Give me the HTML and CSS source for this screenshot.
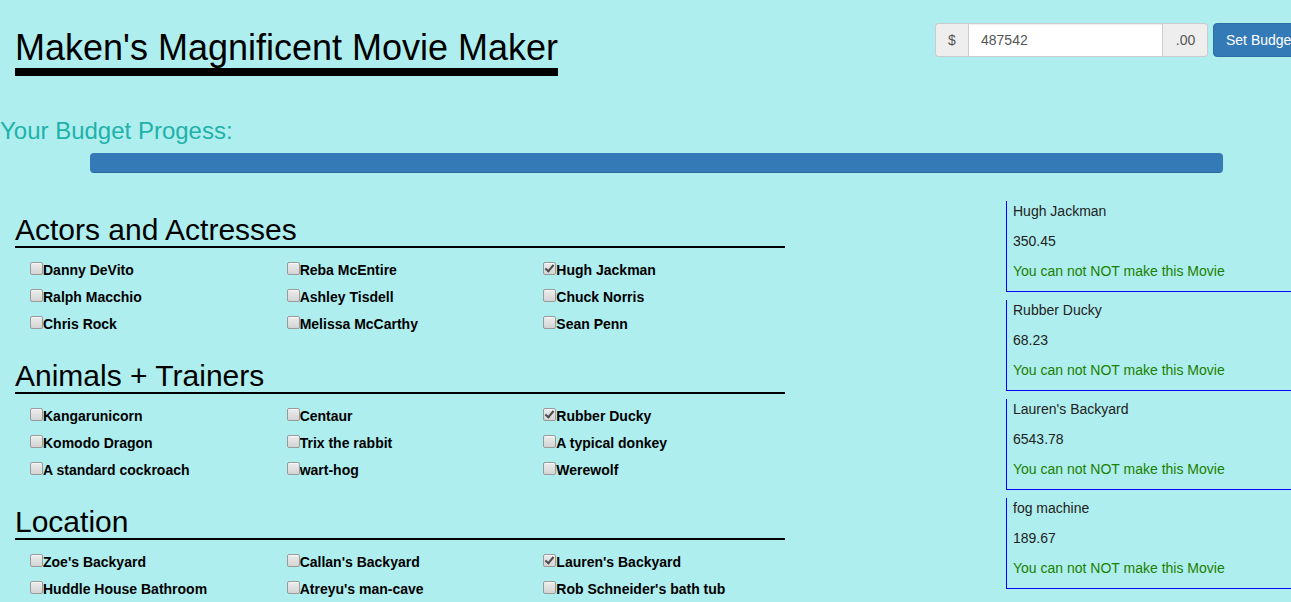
FILE: index.html
```html
<!DOCTYPE html>
<html lang="en">
<head>
<meta charset="utf-8">
<title>Maken's Magnificent Movie Maker</title>
<link rel="stylesheet" href="styles.css">
</head>
<body>
<header class="top">
  <h1 class="title">Maken's Magnificent Movie Maker</h1>
  <form class="budget-form">
    <div class="input-group">
      <span class="addon addon-left">$</span>
      <input class="budget-input" type="text" value="487542">
      <span class="addon addon-right">.00</span>
    </div>
    <button type="button" class="btn-primary">Set Budget</button>
  </form>
</header>

<h3 class="progress-label">Your Budget Progess:</h3>
<div class="progress"><div class="progress-bar"></div></div>

<main class="main">
  <div class="choices">
    <section class="group">
      <h2 class="group-title">Actors and Actresses</h2>
      <div class="options">
        <label class="opt"><input type="checkbox"><span>Danny DeVito</span></label>
        <label class="opt"><input type="checkbox"><span>Reba McEntire</span></label>
        <label class="opt"><input type="checkbox" checked><span>Hugh Jackman</span></label>
        <label class="opt"><input type="checkbox"><span>Ralph Macchio</span></label>
        <label class="opt"><input type="checkbox"><span>Ashley Tisdell</span></label>
        <label class="opt"><input type="checkbox"><span>Chuck Norris</span></label>
        <label class="opt"><input type="checkbox"><span>Chris Rock</span></label>
        <label class="opt"><input type="checkbox"><span>Melissa McCarthy</span></label>
        <label class="opt"><input type="checkbox"><span>Sean Penn</span></label>
      </div>
    </section>
    <section class="group">
      <h2 class="group-title">Animals + Trainers</h2>
      <div class="options">
        <label class="opt"><input type="checkbox"><span>Kangarunicorn</span></label>
        <label class="opt"><input type="checkbox"><span>Centaur</span></label>
        <label class="opt"><input type="checkbox" checked><span>Rubber Ducky</span></label>
        <label class="opt"><input type="checkbox"><span>Komodo Dragon</span></label>
        <label class="opt"><input type="checkbox"><span>Trix the rabbit</span></label>
        <label class="opt"><input type="checkbox"><span>A typical donkey</span></label>
        <label class="opt"><input type="checkbox"><span>A standard cockroach</span></label>
        <label class="opt"><input type="checkbox"><span>wart-hog</span></label>
        <label class="opt"><input type="checkbox"><span>Werewolf</span></label>
      </div>
    </section>
    <section class="group">
      <h2 class="group-title">Location</h2>
      <div class="options">
        <label class="opt"><input type="checkbox"><span>Zoe's Backyard</span></label>
        <label class="opt"><input type="checkbox"><span>Callan's Backyard</span></label>
        <label class="opt"><input type="checkbox" checked><span>Lauren's Backyard</span></label>
        <label class="opt"><input type="checkbox"><span>Huddle House Bathroom</span></label>
        <label class="opt"><input type="checkbox"><span>Atreyu's man-cave</span></label>
        <label class="opt"><input type="checkbox"><span>Rob Schneider's bath tub</span></label>
      </div>
    </section>
  </div>

  <aside class="selected">
    <div class="card">
      <p>Hugh Jackman</p>
      <p>350.45</p>
      <p class="ok">You can not NOT make this Movie</p>
    </div>
    <div class="card">
      <p>Rubber Ducky</p>
      <p>68.23</p>
      <p class="ok">You can not NOT make this Movie</p>
    </div>
    <div class="card">
      <p>Lauren's Backyard</p>
      <p>6543.78</p>
      <p class="ok">You can not NOT make this Movie</p>
    </div>
    <div class="card">
      <p>fog machine</p>
      <p>189.67</p>
      <p class="ok">You can not NOT make this Movie</p>
    </div>
  </aside>
</main>
</body>
</html>
```

FILE: styles.css
```css
* { box-sizing: border-box; }

html, body {
  margin: 0;
  padding: 0;
}

body {
  background: #afeeee;
  font-family: "Liberation Sans", Arial, Helvetica, sans-serif;
  font-size: 14px;
  line-height: 20px;
  color: #333;
  overflow-x: hidden;
  width: 1291px;
}

/* Header */
.top {
  display: flex;
  align-items: flex-start;
  padding-left: 15px;
}

.title {
  margin: 28px 0 0;
  font-size: 36px;
  line-height: 40px;
  font-weight: normal;
  color: #000;
  border-bottom: 8px solid #000;
  flex: none;
}

.budget-form {
  margin: 23px 0 0 auto;
  width: 356px;
  flex: none;
  display: flex;
  white-space: nowrap;
}

.input-group {
  display: flex;
  height: 34px;
  flex: none;
}

.addon {
  display: block;
  padding: 6px 12px;
  height: 34px;
  font-size: 14px;
  line-height: 20px;
  color: #555;
  background: #eee;
  border: 1px solid #ccc;
  text-align: center;
}

.addon-left {
  width: 33px;
  border-right: 0;
  border-radius: 4px 0 0 4px;
  padding: 6px 0;
}

.addon-right {
  width: 45px;
  border-left: 0;
  border-radius: 0 4px 4px 0;
  padding: 6px 0 6px 1px;
}

.budget-input {
  width: 195px;
  height: 34px;
  margin: 0;
  padding: 6px 12px;
  font-family: inherit;
  font-size: 14px;
  line-height: 20px;
  color: #555;
  background: #fff;
  border: 1px solid #ccc;
  border-radius: 0;
  box-shadow: inset 0 1px 1px rgba(0, 0, 0, 0.075);
  outline: none;
}

.btn-primary {
  flex: none;
  margin-left: 5px;
  height: 34px;
  padding: 6px 12px;
  font-family: inherit;
  font-size: 14px;
  line-height: 20px;
  color: #fff;
  background: #337ab7;
  border: 1px solid #2e6da4;
  border-radius: 4px;
}

/* Progress */
.progress-label {
  margin: 42px 0 0;
  font-size: 24px;
  line-height: 26px;
  font-weight: normal;
  color: #20b2aa;
}

.progress {
  margin: 9px 0 0 90px;
  width: 1133px;
  height: 20px;
  border-radius: 4px;
  overflow: hidden;
}

.progress-bar {
  width: 100%;
  height: 100%;
  background: #337ab7;
  box-shadow: inset 0 -1px 0 rgba(0, 0, 0, 0.15);
}

/* Main */
.main {
  display: flex;
  align-items: flex-start;
  margin-top: 28px;
}

.choices {
  flex: none;
  width: 770px;
  margin-left: 15px;
  padding-top: 12px;
}

.group + .group {
  margin-top: 25px;
}

.group-title {
  margin: 0;
  font-size: 30px;
  line-height: 33px;
  font-weight: normal;
  color: #000;
  border-bottom: 2px solid #000;
}

.options {
  display: grid;
  grid-template-columns: repeat(3, 1fr);
  grid-auto-rows: 20px;
  row-gap: 7px;
  margin-top: 12px;
}

.opt {
  display: flex;
  align-items: flex-start;
  padding-left: 15px;
  font-weight: bold;
  font-size: 14px;
  line-height: 20px;
  color: #000;
  white-space: nowrap;
}

.opt input {
  -webkit-appearance: none;
  appearance: none;
  position: relative;
  flex: none;
  width: 13px;
  height: 13px;
  margin: 2px 0 0;
  border: 1px solid #9a9a9a;
  border-radius: 2px;
  background: linear-gradient(#ececec, #d4d4d4);
  box-shadow: inset 0 1px 0 rgba(255, 255, 255, 0.6);
}

.opt input:checked::after {
  content: "";
  position: absolute;
  left: 3px;
  top: 0px;
  width: 3px;
  height: 7px;
  border-right: 2px solid #4a4a4a;
  border-bottom: 2px solid #4a4a4a;
  transform: rotate(40deg);
}

/* Selected cards */
.selected {
  flex: 1;
  margin-left: 221px;
}

.card {
  border-left: 1px solid #0000ff;
  border-bottom: 1px solid #0000ff;
  padding-left: 6px;
  margin-bottom: 8px;
}

.card p {
  margin: 0 0 10px;
  line-height: 20px;
  color: #222;
}

.card .ok {
  color: #1a8000;
}
```
